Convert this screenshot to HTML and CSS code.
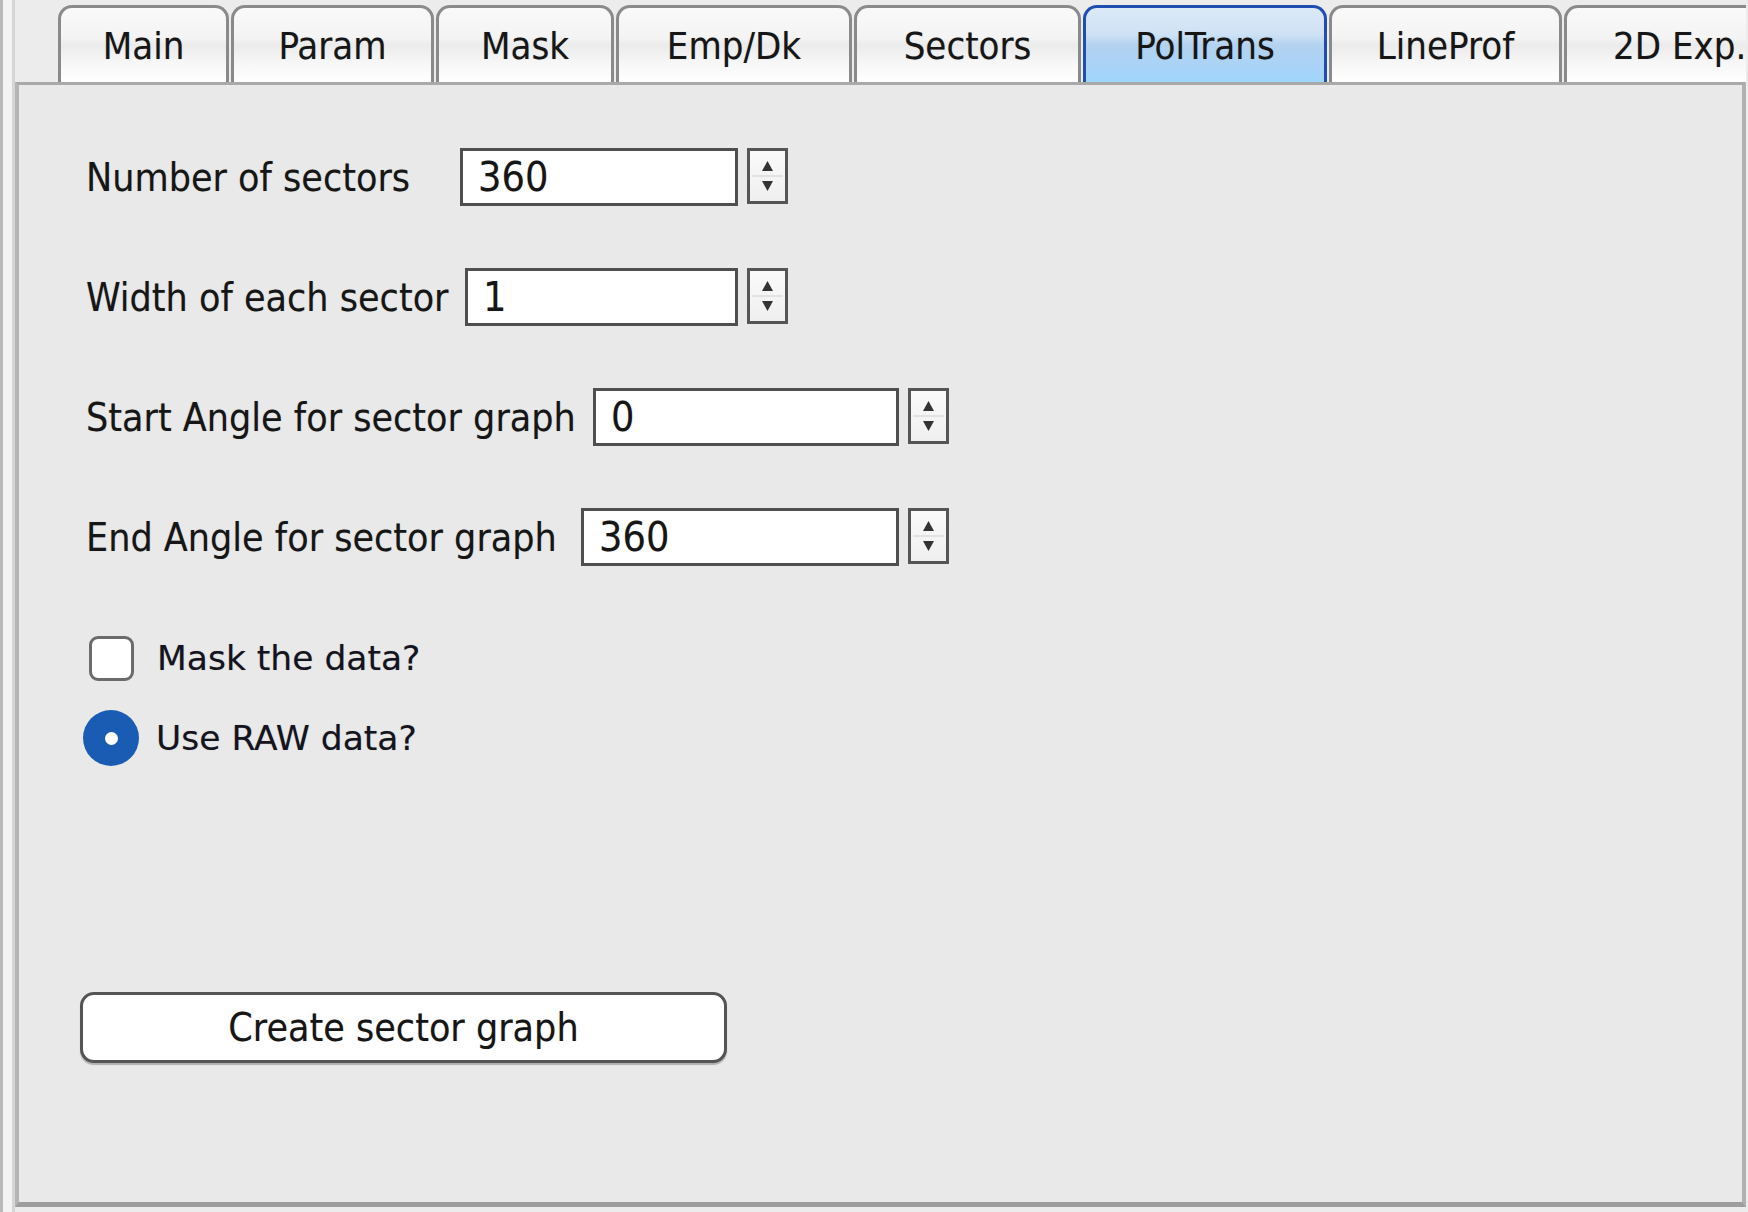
FILE: index.html
```html
<!DOCTYPE html>
<html>
<head>
<meta charset="utf-8">
<title>PolTrans</title>
<link rel="stylesheet" href="styles.css">
</head>
<body>
<div class="edge"><div class="edge-dark"></div><div class="edge-light"></div><div class="edge-mid"></div></div>
<div class="window">
  <div class="tabbar">
    <div class="tab t-main">Main</div>
    <div class="tab t-param">Param</div>
    <div class="tab t-mask">Mask</div>
    <div class="tab t-emp">Emp/Dk</div>
    <div class="tab t-sectors">Sectors</div>
    <div class="tab t-pol selected">PolTrans</div>
    <div class="tab t-line">LineProf</div>
    <div class="tab t-2d">2D Exp.</div>
  </div>
  <div class="panel">
    <div class="field f1">
      <span class="label">Number of sectors</span>
      <div class="input">360</div>
      <div class="spin"><svg width="35" height="50" viewBox="0 0 35 50"><polygon points="12,20 23,20 17.5,10" fill="#333"/><polygon points="12,30 23,30 17.5,40" fill="#333"/><line x1="2" y1="25" x2="33" y2="25" stroke="#e2e2e2" stroke-width="2"/></svg></div>
    </div>
    <div class="field f2">
      <span class="label">Width of each sector</span>
      <div class="input">1</div>
      <div class="spin"><svg width="35" height="50" viewBox="0 0 35 50"><polygon points="12,20 23,20 17.5,10" fill="#333"/><polygon points="12,30 23,30 17.5,40" fill="#333"/><line x1="2" y1="25" x2="33" y2="25" stroke="#e2e2e2" stroke-width="2"/></svg></div>
    </div>
    <div class="field f3">
      <span class="label">Start Angle for sector graph</span>
      <div class="input">0</div>
      <div class="spin"><svg width="35" height="50" viewBox="0 0 35 50"><polygon points="12,20 23,20 17.5,10" fill="#333"/><polygon points="12,30 23,30 17.5,40" fill="#333"/><line x1="2" y1="25" x2="33" y2="25" stroke="#e2e2e2" stroke-width="2"/></svg></div>
    </div>
    <div class="field f4">
      <span class="label">End Angle for sector graph</span>
      <div class="input">360</div>
      <div class="spin"><svg width="35" height="50" viewBox="0 0 35 50"><polygon points="12,20 23,20 17.5,10" fill="#333"/><polygon points="12,30 23,30 17.5,40" fill="#333"/><line x1="2" y1="25" x2="33" y2="25" stroke="#e2e2e2" stroke-width="2"/></svg></div>
    </div>
    <div class="option opt-check">
      <span class="checkbox"></span>
      <span class="opt-text">Mask the data?</span>
    </div>
    <div class="option opt-radio">
      <span class="radio"><span class="dot"></span></span>
      <span class="opt-text">Use RAW data?</span>
    </div>
    <div class="button">Create sector graph</div>
  </div>
</div>
</body>
</html>
```
FILE: styles.css
```css
html, body {
  margin: 0;
  padding: 0;
}
body {
  width: 1748px;
  height: 1212px;
  display: flex;
  background: #ececec;
  overflow: hidden;
  font-family: "DejaVu Sans Condensed", "DejaVu Sans", sans-serif;
  font-stretch: condensed;
  color: #161616;
}
.edge {
  width: 15px;
  display: flex;
  flex-shrink: 0;
}
.edge-dark { width: 3px; background: #b9b9b9; }
.edge-light { width: 9px; background: #f3f3f3; }
.edge-mid { width: 3px; background: #d6d6d6; }
.window {
  width: 1731px;
  display: flex;
  flex-direction: column;
}
.tabbar {
  height: 77px;
  padding-top: 5px;
  padding-left: 43px;
  display: flex;
  align-items: stretch;
  background: #ececec;
  overflow: hidden;
}
.tab {
  box-sizing: border-box;
  flex-shrink: 0;
  margin-right: 2px;
  border: 3px solid #8a8a8a;
  border-bottom: none;
  border-radius: 14px 14px 0 0;
  background: linear-gradient(#f9f9f9 0%, #f4f4f4 40%, #ebebeb 50%, #f7f7f7 75%, #ffffff 100%);
  font-size: 38px;
  display: flex;
  align-items: center;
  justify-content: center;
  padding-top: 2px;
  text-shadow: 0 0 1px rgba(0,0,0,0.25);
}
.t-main { width: 171px; }
.t-param { width: 203px; }
.t-mask { width: 178px; }
.t-emp { width: 236px; }
.t-sectors { width: 227px; }
.t-pol { width: 244px; }
.t-line { width: 233px; }
.t-2d { width: 240px; justify-content: flex-start; padding-left: 46px; }
.tab.selected {
  border-color: #1f4db0;
  background: linear-gradient(#dce9f7 0%, #cfe2f5 35%, #b3d2f0 50%, #a9d3f7 80%, #9fd5fb 100%);
}
.panel {
  flex: 1;
  box-sizing: border-box;
  border-style: solid;
  border-color: #a9a9a9;
  border-width: 3px 4px 5px 4px;
  border-left-color: #b5b5b5;
  border-right-color: #b0b0b0;
  border-bottom-color: #9d9d9d;
  background: #e9e9e9;
  margin-bottom: 5px;
  padding: 63px 0 0 67px;
  display: flex;
  flex-direction: column;
  align-items: flex-start;
}
.field {
  height: 58px;
  display: flex;
  align-items: center;
  margin-bottom: 62px;
}
.label {
  font-size: 39px;
  white-space: nowrap;
  text-shadow: 0 0 1px rgba(0,0,0,0.25);
}
.f1 .label { width: 374px; }
.f2 .label { width: 379px; }
.f3 .label { width: 507px; }
.f4 .label { width: 495px; }
.input {
  box-sizing: border-box;
  height: 58px;
  border: 3px solid #4f4f4f;
  background: #ffffff;
  font-size: 41px;
  padding-left: 15px;
  display: flex;
  align-items: center;
  text-shadow: 0 0 1px rgba(0,0,0,0.25);
}
.f1 .input { width: 278px; }
.f2 .input { width: 273px; }
.f3 .input { width: 306px; }
.f4 .input { width: 318px; }
.spin {
  box-sizing: border-box;
  margin-left: 9px;
  width: 41px;
  height: 56px;
  border: 3px solid #555555;
  background: linear-gradient(#fafafa, #efefef);
  display: flex;
  margin-top: -2px;
}
.option {
  height: 56px;
  display: flex;
  align-items: center;
}
.opt-check { margin-top: 2px; }
.opt-radio { margin-top: 24px; }
.checkbox {
  box-sizing: border-box;
  width: 45px;
  height: 45px;
  margin-left: 3px;
  margin-right: 23px;
  border: 3px solid #6b6b6b;
  border-radius: 9px;
  background: #ffffff;
}
.radio {
  box-sizing: border-box;
  width: 56px;
  height: 56px;
  margin-left: -3px;
  margin-right: 17px;
  border-radius: 50%;
  background: #1a5cb4;
  display: flex;
  align-items: center;
  justify-content: center;
}
.dot {
  width: 13px;
  height: 13px;
  border-radius: 50%;
  background: #ffffff;
}
.opt-text {
  font-family: "DejaVu Sans", sans-serif;
  font-stretch: normal;
  font-size: 34.5px;
  color: #141420;
  text-shadow: 0 0 1px rgba(0,0,0,0.3);
}
.button {
  box-sizing: border-box;
  margin-top: 226px;
  margin-left: -6px;
  width: 647px;
  height: 71px;
  border: 3px solid #545454;
  border-radius: 14px;
  background: #ffffff;
  box-shadow: 0 2px 1px rgba(0,0,0,0.25);
  font-size: 39px;
  display: flex;
  align-items: center;
  justify-content: center;
  text-shadow: 0 0 1px rgba(0,0,0,0.25);
}
```
